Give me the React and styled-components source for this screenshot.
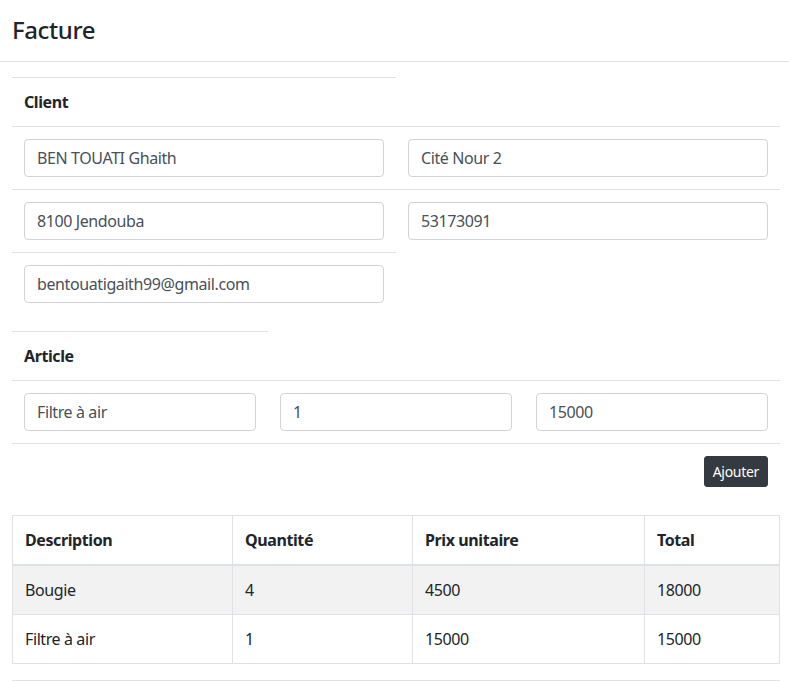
import React from "react";
import styled, { createGlobalStyle } from "styled-components";

const Global = createGlobalStyle`
  html, body { margin: 0; padding: 0; background: #fff; }
  body {
    font-family: "Segoe UI", "Noto Sans", "Open Sans", Roboto, sans-serif;
    font-size: 16px;
    line-height: 1.5;
    letter-spacing: -0.4px;
    color: #212529;
  }
  * { box-sizing: border-box; }
`;

const Header = styled.header`
  padding: 16px 12px;
  border-bottom: 1px solid #dee2e6;
`;

const Title = styled.h4`
  margin: 0;
  font-size: 24px;
  font-weight: 500;
  line-height: 1.2;
  color: #212529;
`;

const Body = styled.main`
  padding: 15px 9px 0 12px;
`;

const Section = styled.section`
  display: flex;
  flex-direction: column;
  margin-top: ${(p) => p.$mt || 0}px;
`;

const Row = styled.div`
  display: grid;
  grid-template-columns: repeat(${(p) => p.$cols}, 1fr);
  width: ${(p) => p.$width || "100%"};
  border-top: 1px solid #dee2e6;
`;

const Cell = styled.div`
  padding: 12px;
  text-align: ${(p) => p.$align || "left"};
`;

const Label = styled.span`
  font-weight: 700;
`;

const Input = styled.input`
  display: block;
  width: 100%;
  height: 38px;
  padding: 6px 12px;
  font: inherit;
  font-size: 16px;
  line-height: 1.5;
  letter-spacing: -0.4px;
  color: #495057;
  background: #fff;
  border: 1px solid #ced4da;
  border-radius: 4px;
  outline: none;
`;

const Button = styled.button`
  display: inline-block;
  height: 31px;
  padding: 4px 8px;
  font: inherit;
  font-size: 14px;
  line-height: 1.5;
  letter-spacing: -0.3px;
  color: #fff;
  background: #343a40;
  border: 1px solid #343a40;
  border-radius: 3px;
  vertical-align: top;
`;

const Table = styled.table`
  width: 100%;
  border-collapse: collapse;
  margin-bottom: 16px;
  border: 1px solid #dee2e6;
`;

const Th = styled.th`
  padding: 12px;
  text-align: left;
  font-weight: 700;
  border: 1px solid #dee2e6;
  border-bottom-width: 2px;
  width: ${(p) => p.$w || "auto"};
`;

const Tr = styled.tr`
  background: ${(p) => (p.$striped ? "#f2f2f2" : "#fff")};
`;

const Td = styled.td`
  padding: 12px;
  border: 1px solid #dee2e6;
  color: #212529;
`;

const Footer = styled.div`
  border-top: 1px solid #dee2e6;
  height: 4px;
`;

const items = [
  { d: "Bougie", q: "4", p: "4500", t: "18000" },
  { d: "Filtre à air", q: "1", p: "15000", t: "15000" },
];

export default function App() {
  return (
    <>
      <Global />
      <Header>
        <Title>Facture</Title>
      </Header>
      <Body>
        <Section>
          <Row $cols={1} $width="50%">
            <Cell><Label>Client</Label></Cell>
          </Row>
          <Row $cols={2}>
            <Cell><Input defaultValue="BEN TOUATI Ghaith" /></Cell>
            <Cell><Input defaultValue="Cité Nour 2" /></Cell>
          </Row>
          <Row $cols={2}>
            <Cell><Input defaultValue="8100 Jendouba" /></Cell>
            <Cell><Input defaultValue="53173091" /></Cell>
          </Row>
          <Row $cols={1} $width="50%">
            <Cell><Input defaultValue="bentouatigaith99@gmail.com" /></Cell>
          </Row>
        </Section>
        <Section $mt={16}>
          <Row $cols={1} $width="33.333%">
            <Cell><Label>Article</Label></Cell>
          </Row>
          <Row $cols={3}>
            <Cell><Input defaultValue="Filtre à air" /></Cell>
            <Cell><Input defaultValue="1" /></Cell>
            <Cell><Input defaultValue="15000" /></Cell>
          </Row>
          <Row $cols={1}>
            <Cell $align="right"><Button>Ajouter</Button></Cell>
          </Row>
        </Section>
        <Section $mt={16}>
          <Table>
            <thead>
              <tr>
                <Th $w="220px">Description</Th>
                <Th $w="180px">Quantité</Th>
                <Th $w="232px">Prix unitaire</Th>
                <Th>Total</Th>
              </tr>
            </thead>
            <tbody>
              {items.map((it, i) => (
                <Tr key={i} $striped={i % 2 === 0}>
                  <Td>{it.d}</Td>
                  <Td>{it.q}</Td>
                  <Td>{it.p}</Td>
                  <Td>{it.t}</Td>
                </Tr>
              ))}
            </tbody>
          </Table>
          <Footer />
        </Section>
      </Body>
    </>
  );
}
